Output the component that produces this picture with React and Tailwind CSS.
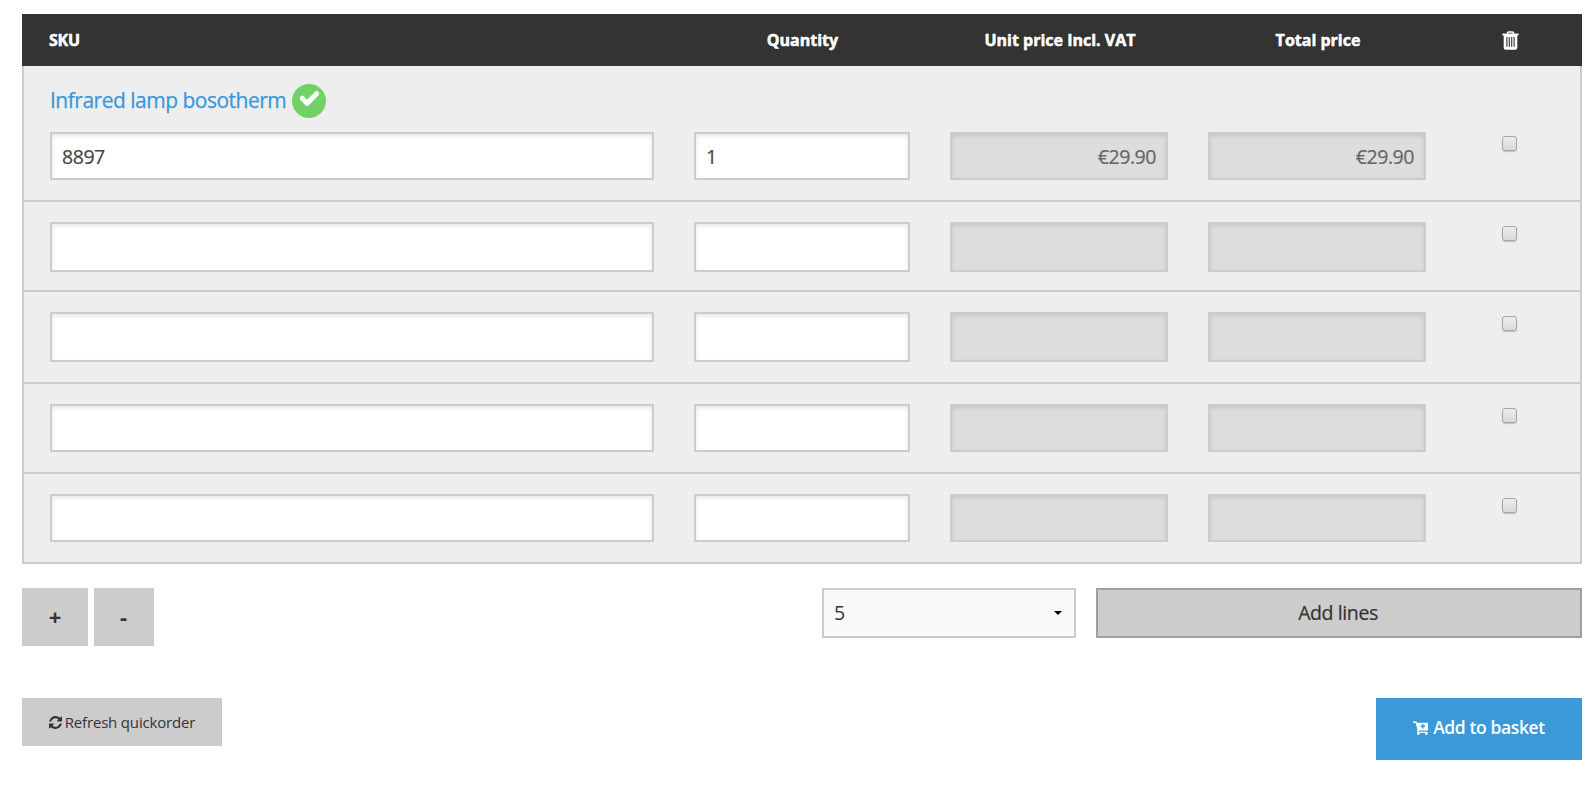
import { FaCheck } from "react-icons/fa";

const rows = [
  { sku: "8897", qty: "1", unit: "€29.90", total: "€29.90", name: "Infrared lamp bosotherm", row: "h-[136px]", field: "h-12" },
  { row: "h-[90px]", field: "h-[50px]" },
  { row: "h-[92px]", field: "h-[50px]" },
  { row: "h-[90px]", field: "h-12" },
  { row: "h-[90px]", field: "h-12" },
];

const field = "block border-2 border-[#ccc] px-[10px] text-[19.5px] tracking-[-0.45px] outline-none [-webkit-text-stroke:0.2px_currentColor]";
const editable = "bg-white text-[#444] shadow-[inset_0_2px_4px_rgba(0,0,0,0.1)]";
const locked = "bg-[#ddd] text-right text-[#666] shadow-[inset_0_2px_4px_rgba(0,0,0,0.1)]";

function TrashIcon() {
  return (
    <svg viewBox="0 0 17 19" className="h-[19px] w-[17px]" fill="none" stroke="#fff">
      <path d="M5.4 3v-.6q0-1.5 1.4-1.5h3.4q1.4 0 1.4 1.5V3" strokeWidth="1.5" />
      <path d="M.4 3.5h16.2" strokeWidth="1.9" />
      <path d="M1.7 4h13.6v12.6q0 2.2-2 2.2H3.7q-2 0-2-2.2z" fill="#fff" stroke="none" />
      <path d="M4.9 6v9.8M7.3 6v9.8M9.7 6v9.8M12.1 6v9.8" stroke="#333" strokeWidth="1.1" />
    </svg>
  );
}

function RefreshIcon() {
  return (
    <svg viewBox="0 0 1536 1536" className="h-[13px] w-[13px]" fill="currentColor">
      <path d="M1511 928q0 5-1 7-64 268-268 434.500T764 1536q-146 0-282.500-55T238 1324l-129 129q-19 19-45 19t-45-19-19-45V960q0-26 19-45t45-19h448q26 0 45 19t19 45-19 45l-137 137q71 66 161 102t187 36q134 0 250-65t186-179q11-17 53-117 8-23 30-23h192q13 0 22.500 9.500T1511 928zm25-800v448q0 26-19 45t-45 19h-448q-26 0-45-19t-19-45 19-45l138-138Q969 256 768 256q-134 0-250 65T332 500q-11 17-53 117-8 23-30 23H50q-13 0-22.500-9.500T18 608v-7q65-268 270-434.500T768 0q146 0 284 55.500T1297 212l130-129q19-19 45-19t45 19 19 45z" />
    </svg>
  );
}

function CartIcon() {
  return (
    <svg viewBox="0 0 15 15" className="h-[15px] w-[15px]" fill="#fff">
      <path d="M0 .5h3.4l.8 1.3H15V9.400H5.700v1.400h8.800v1.200H4.300V8L2.600 1.900H0z" />
      <rect x="4.300" y="11.500" width="2.200" height="2.600" rx=".8" />
      <rect x="12.300" y="11.500" width="2.200" height="2.600" rx=".8" />
      <path d="M9.800 3v4.600M7.500 5.300h4.600" stroke="#3a99d9" strokeWidth="1.400" />
    </svg>
  );
}

function Row({ r }) {
  return (
    <div className={`${r.row} border-b-2 border-[#ccc] pl-[26px] ${r.name ? "" : "pt-5"}`}>
      {r.name && (
        <div className="flex h-[66px] items-center pt-[3px]">
          <a className="w-[236px] text-[21px] leading-none tracking-[-0.5px] whitespace-nowrap text-[#3a99d9] [-webkit-text-stroke:0.25px_currentColor]">{r.name}</a>
          <span className="ml-[6px] flex h-[34px] w-[34px] items-start justify-center rounded-full bg-[#72d267] pt-[5px]">
            <FaCheck className="text-[19px] text-white" stroke="currentColor" strokeWidth="35" />
          </span>
        </div>
      )}
      <div className="flex gap-10">
        <input readOnly defaultValue={r.sku} className={`${field} ${editable} ${r.field} w-[604px]`} />
        <input readOnly defaultValue={r.qty} className={`${field} ${editable} ${r.field} w-[216px]`} />
        <input readOnly defaultValue={r.unit} className={`${field} ${locked} ${r.field} w-[218px]`} />
        <input readOnly defaultValue={r.total} className={`${field} ${locked} ${r.field} w-[218px]`} />
        <input
          type="checkbox"
          className="mt-1 ml-9 h-[15px] w-[15px] appearance-none rounded-[3px] border border-[#a6a6a6] bg-linear-to-b from-[#ededed] to-[#dadada] shadow-[0_1px_1px_rgba(0,0,0,0.2)]"
        />
      </div>
    </div>
  );
}

export default function App() {
  return (
    <div className="h-[804px] w-[1596px] bg-white pt-[14px] pr-[14px] pl-[22px] font-['Open_Sans',sans-serif] text-[#333]">
      <div className="flex h-[52px] items-center gap-10 bg-[#333] pl-[27px] text-base font-bold text-white [-webkit-text-stroke:0.5px_#fff]">
        <span className="w-[605px] tracking-[-0.2px]">SKU</span>
        <span className="w-[217px] text-center">Quantity</span>
        <span className="w-[218px] text-center">Unit price Incl. VAT</span>
        <span className="w-[218px] text-center">Total price</span>
        <span className="ml-[35px]"><TrashIcon /></span>
      </div>
      <div className="border-x-2 border-[#ccc] bg-[#eee]">
        {rows.map((r, i) => <Row key={i} r={r} />)}
      </div>

      <div className="mt-6 flex items-start">
        <button className="h-[58px] w-[66px] bg-[#ccc] pb-[2px] text-[22px] font-bold">+</button>
        <button className="ml-[6px] h-[58px] w-[60px] bg-[#ccc] pr-px pb-px text-[22px] font-bold">-</button>
        <div className="ml-auto flex h-[50px] w-[254px] items-center justify-between border-2 border-[#ccc] bg-[#fafafa] pr-3 pl-[10px] text-[19.5px]">
          <span>5</span>
          <svg viewBox="0 0 8 4" className="h-1 w-2"><path d="M0 0h8L4 4z" fill="#000" /></svg>
        </div>
        <button className="ml-5 h-[50px] w-[486px] border-2 border-[#a0a0a0] bg-[#ccc] pr-[2px] text-[19.5px] tracking-[-0.4px] [-webkit-text-stroke:0.2px_currentColor]">Add lines</button>
      </div>

      <div className="mt-[52px] flex items-start justify-between">
        <button className="flex h-12 w-[200px] items-center justify-center bg-[#ccc] text-[15px] tracking-[-0.17px]">
          <span className="mr-[3px]"><RefreshIcon /></span>
          Refresh quickorder
        </button>
        <button className="flex h-[62px] w-[206px] items-center justify-center bg-[#3a99d9] pb-[3px] text-[17.5px] font-semibold tracking-[-0.38px] text-white">
          <span className="mr-[5px] pt-px"><CartIcon /></span>
          Add to basket
        </button>
      </div>
    </div>
  );
}
